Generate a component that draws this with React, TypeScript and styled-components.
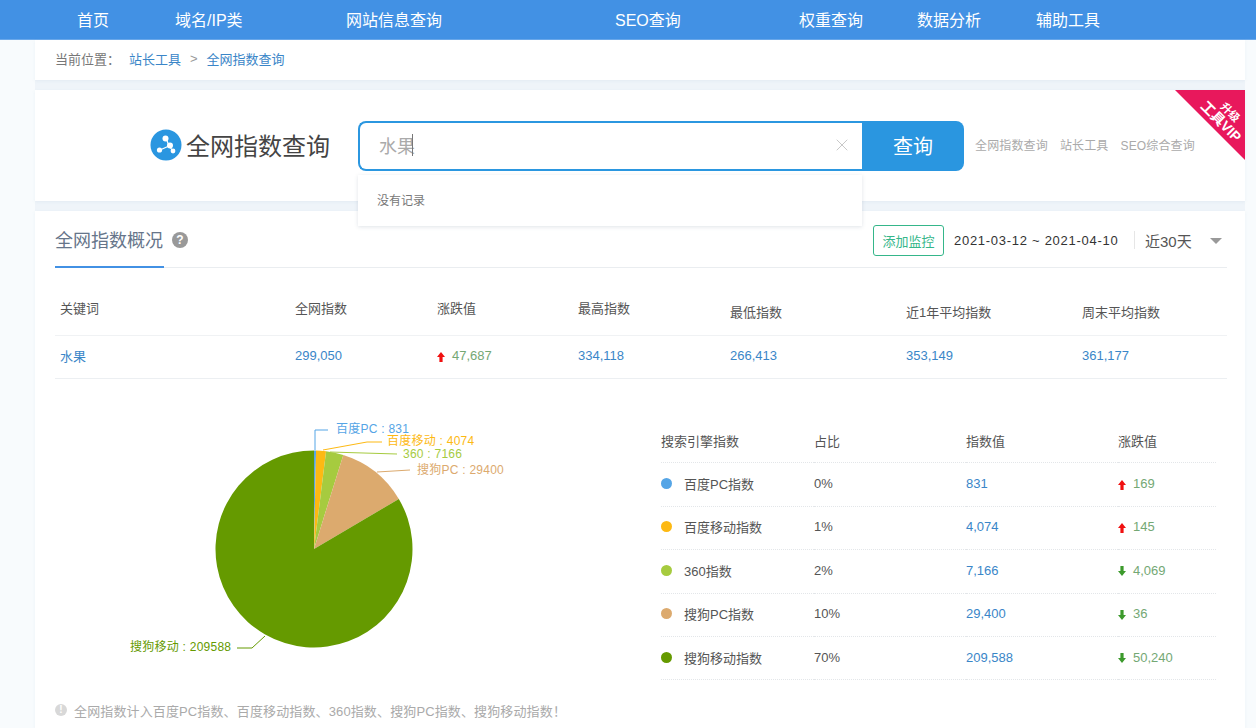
import React from "react";
import styled, { createGlobalStyle } from "styled-components";
import { X } from "lucide-react";

const FONT = `"Liberation Sans", "Noto Sans CJK SC", sans-serif`;

const Global = createGlobalStyle`
  html, body { margin: 0; padding: 0; height: 728px; overflow: hidden; background: #f8fbfd; font-family: ${FONT}; }
  * { box-sizing: border-box; }
`;

const NavBar = styled.nav`
  height: 40px;
  background: #4291e4;
  border-bottom: 1px solid #6aa8ea;
  display: grid;
  grid-template-columns: 98px 171px 269px 184px 118px 119px 1fr;
  padding: 0 0 1px 77px;
  align-items: center;
  color: #fff;
  font-size: 16px;
`;
const Main = styled.main`
  width: 1210px;
  margin-left: 35px;
  display: flex;
  flex-direction: column;
  gap: 10px;
  background: #eff4f9;
`;
const Card = styled.section`
  background: #fff;
  box-shadow: 0 1px 3px rgba(140, 170, 200, 0.12);
  position: relative;
`;
const Crumbs = styled(Card)`
  height: 40px;
  display: flex;
  align-items: center;
  padding: 0 0 3px 20px;
  font-size: 13px;
  color: #777;
`;
const CrumbLabel = styled.span`
  width: 74px;
`;
const CrumbLink = styled.a`
  color: #3a86c8;
`;
const CrumbSep = styled.span`
  margin: 0 9px;
  color: #999;
`;
const SearchCard = styled(Card)`
  height: 111px;
  display: flex;
  align-items: flex-start;
  padding: 31px 0 0 115px;
`;
const Brand = styled.div`
  width: 208px;
  height: 46px;
  display: flex;
  align-items: center;
  gap: 4px;
  font-size: 24px;
  color: #444;
`;
const BrandMark = styled.svg`
  margin-top: 2px;
  flex: none;
`;
const SearchBox = styled.div`
  width: 504px;
  height: 50px;
  border: 2px solid #2b97e0;
  border-right: none;
  border-radius: 8px 0 0 8px;
  display: flex;
  align-items: center;
  padding: 0 10px 2px 19px;
  font-size: 18px;
  color: #aaa;
`;
const Caret = styled.span`
  width: 1px;
  height: 22px;
  background: #777;
  margin-left: -3px;
`;
const Clear = styled.span`
  margin-left: auto;
  display: flex;
  color: #c8c8c8;
`;
const SearchButton = styled.button`
  width: 102px;
  height: 50px;
  border: 0;
  border-radius: 0 8px 8px 0;
  background: #2a96e0;
  color: #fff;
  font: 20px ${FONT};
  padding: 0 0 2px;
`;
const Related = styled.div`
  height: 47px;
  margin-left: 11px;
  display: flex;
  align-items: center;
  gap: 12px;
  font-size: 12px;
  letter-spacing: 0.15px;
  color: #aaa;
`;
const Suggest = styled.div`
  position: absolute;
  z-index: 2;
  left: 323px;
  top: 85px;
  width: 504px;
  height: 51px;
  background: #fff;
  box-shadow: 0 1px 4px rgba(100, 120, 140, 0.2);
  padding-left: 19px;
  font-size: 12px;
  line-height: 53px;
  color: #777;
`;
const Ribbon = styled.div`
  position: absolute;
  right: 0;
  top: 0;
  width: 70px;
  height: 70px;
  background: #e8185c;
  clip-path: polygon(0 0, 100% 0, 100% 100%);
  color: #fff;
`;
const RibbonText = styled.div`
  position: absolute;
  left: 15px;
  top: 14px;
  width: 70px;
  transform: rotate(45deg);
  text-align: center;
  font-weight: 700;
  font-size: 14px;
  line-height: 15px;
`;
const RibbonTop = styled.div`
  font-size: 11px;
  line-height: 12px;
`;
const Overview = styled(Card)`
  height: 517px;
  padding: 0 18px 0 20px;
`;
const OverviewHead = styled.header`
  height: 57px;
  border-bottom: 1px solid #eaedf0;
  display: flex;
  align-items: center;
  padding-top: 2px;
`;
const Title = styled.h2`
  margin: -2px 0 -1px;
  height: 57px;
  width: 109px;
  line-height: 60px;
  border-bottom: 2px solid #4291e4;
  font-size: 18px;
  font-weight: 400;
  color: #66758a;
  white-space: nowrap;
`;
const Help = styled.span`
  width: 16px;
  height: 16px;
  margin-left: 8px;
  border-radius: 50%;
  background: #999;
  color: #fff;
  font-size: 12px;
  font-weight: 700;
  line-height: 16px;
  text-align: center;
`;
const Monitor = styled.button`
  margin-left: auto;
  width: 71px;
  height: 31px;
  border: 1px solid #35b68a;
  border-radius: 3px;
  background: #fff;
  color: #35b68a;
  font: 13px ${FONT};
  padding: 0;
`;
const DateRange = styled.span`
  margin-left: 10px;
  font-size: 13px;
  letter-spacing: 0.72px;
  color: #333;
  width: 180px;
  white-space: nowrap;
`;
const RangeSelect = styled.div`
  width: 93px;
  height: 18px;
  border-left: 1px solid #e6e6e6;
  padding-left: 10px;
  display: flex;
  align-items: center;
  font-size: 15px;
  color: #555;
`;
const CaretDown = styled.span`
  margin: 2px 0 0 18px;
  border-left: 6px solid transparent;
  border-right: 6px solid transparent;
  border-top: 6px solid #999;
`;
const SummaryGrid = styled.div`
  display: grid;
  grid-template-columns: 235px 142px 141px 152px 176px 176px 150px;
  font-size: 13px;
`;
const SummaryHead = styled.div<{ $low?: boolean }>`
  height: 68px;
  padding: ${(p) => (p.$low ? "36px" : "32px")} 0 0 5px;
  border-bottom: 1px solid #f0f2f4;
  color: #555;
  line-height: 18px;
`;
const SummaryCell = styled.div`
  height: 43px;
  padding: 0 0 3px 5px;
  display: flex;
  align-items: center;
  gap: 5px;
  border-bottom: 1px solid #eceff2;
  color: #3a86c8;
`;
const Delta = styled.span`
  color: #74a874;
  display: inline-flex;
  align-items: center;
  gap: 7px;
`;
const Detail = styled.div`
  display: flex;
  height: 290px;
  margin-top: 22px;
`;
const PieSvg = styled.svg`
  width: 606px;
  height: 290px;
  flex: none;
`;
const EngineGrid = styled.div`
  width: 555px;
  height: 279px;
  display: grid;
  grid-template-columns: 153px 152px 152px 98px;
  grid-auto-rows: 43.4px;
  font-size: 13px;
  color: #555;
  margin-top: 19px;
`;
const EngineCell = styled.div<{ $link?: boolean }>`
  display: flex;
  align-items: center;
  gap: 12px;
  padding-bottom: 2px;
  border-bottom: 1px dotted #e3e6e9;
  color: ${(p) => (p.$link ? "#3a86c8" : "#555")};
`;
const Dot = styled.i<{ $color: string }>`
  width: 11px;
  height: 11px;
  border-radius: 50%;
  background: ${(p) => p.$color};
`;
const Note = styled.p`
  margin: 9px 0 0;
  height: 20px;
  display: flex;
  align-items: center;
  gap: 7px;
  font-size: 13px;
  letter-spacing: 0.13px;
  color: #aaa;
`;
const NoteIcon = styled.span`
  width: 12px;
  height: 12px;
  border-radius: 50%;
  background: #d8d8d8;
  color: #fff;
  font-size: 10px;
  font-weight: 700;
  line-height: 12px;
  text-align: center;
`;
const ArrowMark = styled.svg`
  margin-top: 2px;
`;

const Arrow = ({ up }: { up: boolean }) => (
  <ArrowMark width="8" height="10" viewBox="0 0 8 10">
    <path
      d={up ? "M4 0 8 5H5.6V10H2.4V5H0Z" : "M4 10 8 5H5.6V0H2.4V5H0Z"}
      fill={up ? "#f01010" : "#3c9a2c"}
    />
  </ArrowMark>
);

const Logo = () => (
  <BrandMark width="32" height="32" viewBox="0 0 32 32">
    <circle cx="16" cy="16" r="15.5" fill="#2a96e0" />
    <path d="M16 9 19 17 10 21M19 17 23 22" stroke="#fff" strokeWidth="1.2" fill="none" />
    <circle cx="15.5" cy="9.5" r="3" fill="#fff" />
    <circle cx="20" cy="16.5" r="3" fill="#fff" />
    <circle cx="9.5" cy="21" r="2.6" fill="#fff" />
    <circle cx="23" cy="22" r="2.4" fill="#fff" />
  </BrandMark>
);

const NAV = ["首页", "域名/IP类", "网站信息查询", "SEO查询", "权重查询", "数据分析", "辅助工具"];

const SUMMARY = [
  { head: "关键词", value: "水果" },
  { head: "全网指数", value: "299,050" },
  { head: "涨跌值", value: "47,687", delta: true },
  { head: "最高指数", value: "334,118" },
  { head: "最低指数", value: "266,413", low: true },
  { head: "近1年平均指数", value: "353,149", low: true },
  { head: "周末平均指数", value: "361,177", low: true },
];

const ENGINES = [
  { name: "百度PC", color: "#55a5e6", raw: 831, share: "0%", value: "831", up: true, delta: "169" },
  { name: "百度移动", color: "#fdb913", raw: 4074, share: "1%", value: "4,074", up: true, delta: "145" },
  { name: "360", color: "#a6cb3f", raw: 7166, share: "2%", value: "7,166", up: false, delta: "4,069" },
  { name: "搜狗PC", color: "#dcaa6e", raw: 29400, share: "10%", value: "29,400", up: false, delta: "36" },
  { name: "搜狗移动", color: "#659a00", raw: 209588, share: "70%", value: "209,588", up: false, delta: "50,240" },
];

const CX = 314;
const CY = 548;
const R = 98.5;
const total = ENGINES.reduce((s, e) => s + e.raw, 0);
let acc = 0;
const slices = ENGINES.map((e) => {
  const a0 = (acc / total) * Math.PI * 2;
  acc += e.raw;
  const a1 = (acc / total) * Math.PI * 2;
  const pt = (a: number) => `${CX + R * Math.sin(a)} ${CY - R * Math.cos(a)}`;
  return {
    color: e.color,
    d: `M${CX} ${CY}L${pt(a0)}A${R} ${R} 0 ${a1 - a0 > Math.PI ? 1 : 0} 1 ${pt(a1)}Z`,
  };
});

const LABELS = [
  { color: "#55a5e6", text: "百度PC : 831", x: 336, y: 432, line: "315 449 315 429 328 429" },
  { color: "#fdb913", text: "百度移动 : 4074", x: 387, y: 444, line: "323 449 367 441 382 441" },
  { color: "#a6cb3f", text: "360 : 7166", x: 403, y: 457, line: "330 451 397 453" },
  { color: "#dcaa6e", text: "搜狗PC : 29400", x: 417, y: 473, line: "377 471 410 469" },
  { color: "#659a00", text: "搜狗移动 : 209588", x: 130, y: 650, line: "265 635 252 647 237 647" },
];

export default function App() {
  return (
    <>
      <Global />
      <NavBar>
        {NAV.map((n) => (
          <span key={n}>{n}</span>
        ))}
      </NavBar>
      <Main>
        <Crumbs>
          <CrumbLabel>当前位置：</CrumbLabel>
          <CrumbLink>站长工具</CrumbLink>
          <CrumbSep>&gt;</CrumbSep>
          <CrumbLink>全网指数查询</CrumbLink>
        </Crumbs>
        <SearchCard>
          <Brand>
            <Logo />
            全网指数查询
          </Brand>
          <SearchBox>
            水果
            <Caret />
            <Clear>
              <X size={20} strokeWidth={1.2} />
            </Clear>
          </SearchBox>
          <SearchButton>查询</SearchButton>
          <Related>
            <span>全网指数查询</span>
            <span>站长工具</span>
            <span>SEO综合查询</span>
          </Related>
          <Suggest>没有记录</Suggest>
          <Ribbon>
            <RibbonText>
              <RibbonTop>升级</RibbonTop>
              工具VIP
            </RibbonText>
          </Ribbon>
        </SearchCard>
        <Overview>
          <OverviewHead>
            <Title>全网指数概况</Title>
            <Help>?</Help>
            <Monitor>添加监控</Monitor>
            <DateRange>2021-03-12 ~ 2021-04-10</DateRange>
            <RangeSelect>
              近30天
              <CaretDown />
            </RangeSelect>
          </OverviewHead>
          <SummaryGrid>
            {SUMMARY.map((s) => (
              <SummaryHead key={s.head} $low={s.low}>
                {s.head}
              </SummaryHead>
            ))}
            {SUMMARY.map((s) => (
              <SummaryCell key={s.head}>
                {s.delta ? (
                  <Delta>
                    <Arrow up />
                    {s.value}
                  </Delta>
                ) : (
                  s.value
                )}
              </SummaryCell>
            ))}
          </SummaryGrid>
          <Detail>
            <PieSvg viewBox="55 400 606 290">
              {slices.map((s) => (
                <path key={s.color} d={s.d} fill={s.color} />
              ))}
              {LABELS.map((l) => (
                <g key={l.text}>
                  <polyline points={l.line} fill="none" stroke={l.color} strokeWidth="1" />
                  <text x={l.x} y={l.y} fill={l.color} fontSize="12" letterSpacing="0.25" fontFamily={FONT}>
                    {l.text}
                  </text>
                </g>
              ))}
            </PieSvg>
            <EngineGrid>
              <EngineCell>搜索引擎指数</EngineCell>
              <EngineCell>占比</EngineCell>
              <EngineCell>指数值</EngineCell>
              <EngineCell>涨跌值</EngineCell>
              {ENGINES.map((e) => (
                <React.Fragment key={e.name}>
                  <EngineCell>
                    <Dot $color={e.color} />
                    {e.name}指数
                  </EngineCell>
                  <EngineCell>{e.share}</EngineCell>
                  <EngineCell $link>{e.value}</EngineCell>
                  <EngineCell>
                    <Delta>
                      <Arrow up={e.up} />
                      {e.delta}
                    </Delta>
                  </EngineCell>
                </React.Fragment>
              ))}
            </EngineGrid>
          </Detail>
          <Note>
            <NoteIcon>!</NoteIcon>
            全网指数计入百度PC指数、百度移动指数、360指数、搜狗PC指数、搜狗移动指数！
          </Note>
        </Overview>
      </Main>
    </>
  );
}
